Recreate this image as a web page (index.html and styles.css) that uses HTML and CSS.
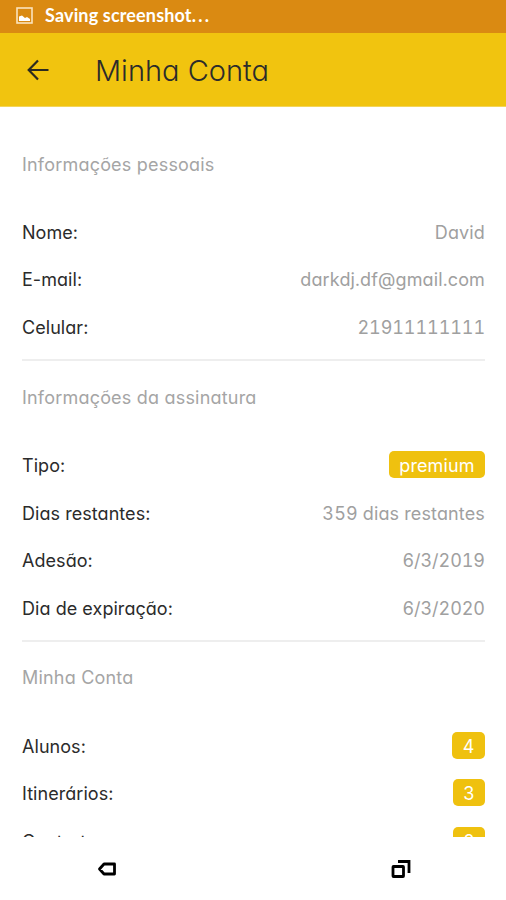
FILE: index.html
```
<!DOCTYPE html>
<html lang="pt-BR">
<head>
    <meta charset="UTF-8">
    <meta name="viewport" content="width=device-width, initial-scale=1.0">
    <title>Minha Conta</title>
    <link rel="stylesheet" href="styles.css">
</head>
<body>
    <div class="status-bar">
        <svg class="status-icon" width="17" height="17" viewBox="0 0 17 17">
            <rect x="1" y="1" width="15" height="15" fill="none" stroke="#fbe3bd" stroke-width="1.6"/>
            <path d="M3 14V9.500l3-1 3 2.500 2-1 3 2v2z" fill="#fff"/>
        </svg>
        <span>Saving screenshot<span class="dots">...</span></span>
    </div>

    <header class="toolbar">
        <svg class="back" width="22" height="22" viewBox="0 0 22 22" fill="none" stroke="#2b2b20" stroke-width="2.2">
            <path d="M21.500 11H2M11 1.500L1.700 11l9.300 9.500"/>
        </svg>
        <h1>Minha Conta</h1>
    </header>

    <main class="content">
        <section>
            <h2>Informações pessoais</h2>
            <div class="row"><span class="label">Nome:</span><span class="value">David</span></div>
            <div class="row"><span class="label">E-mail:</span><span class="value">darkdj.df@gmail.com</span></div>
            <div class="row"><span class="label">Celular:</span><span class="value phone">21911111111</span></div>
        </section>

        <section>
            <h2>Informações da assinatura</h2>
            <div class="row"><span class="label">Tipo:</span><span class="badge">premium</span></div>
            <div class="row"><span class="label">Dias restantes:</span><span class="value">359 dias restantes</span></div>
            <div class="row"><span class="label">Adesão:</span><span class="value date">6/3/2019</span></div>
            <div class="row"><span class="label">Dia de expiração:</span><span class="value date">6/3/2020</span></div>
        </section>

        <section>
            <h2>Minha Conta</h2>
            <div class="row"><span class="label">Alunos:</span><span class="badge">4</span></div>
            <div class="row"><span class="label">Itinerários:</span><span class="badge">3</span></div>
            <div class="row"><span class="label">Contratos:</span><span class="badge">2</span></div>
        </section>
    </main>

    <nav class="nav-bar">
        <svg width="20" height="14" viewBox="0 0 20 14" fill="none" stroke="#000" stroke-width="2.8" stroke-linejoin="round">
            <path d="M7 2h10.500v10H7L2.500 7z"/>
        </svg>
        <svg width="22" height="20" viewBox="0 0 22 20" fill="none" stroke="#000" stroke-width="2.800">
            <rect x="3" y="7.500" width="10.500" height="10" rx="0.500"/>
            <path d="M8 2.500h11V14"/>
        </svg>
    </nav>
</body>
</html>
```
FILE: styles.css
```
body {
    margin: 0;
    height: 900px;
    display: flex;
    flex-direction: column;
    overflow: hidden;
    background: #fff;
    color: #2b2b2b;
    font-family: Inter, "Open Sans", sans-serif;
    font-size: 18px;
    font-feature-settings: "cv11";
}

.status-bar {
    flex: none;
    height: 33px;
    box-sizing: border-box;
    padding: 0 0 3px 16px;
    display: flex;
    align-items: center;
    gap: 12px;
    background: #da8a12;
    color: #fff;
    font-family: Lato, sans-serif;
    font-weight: bold;
    font-size: 18px;
    letter-spacing: 0.15px;
}

.dots {
    letter-spacing: 2.3px;
}

.toolbar {
    flex: none;
    height: 74px;
    box-sizing: border-box;
    padding-left: 27px;
    display: flex;
    align-items: center;
    gap: 46px;
    background: #f1c40f;
    border-bottom: 1px solid #f3d55a;
}

h1 {
    margin: 2px 0 0;
    font-size: 29px;
    font-weight: 300;
}

.content {
    flex: 1;
    min-height: 0;
    overflow: hidden;
    padding: 33.5px 21px 0 22px;
}

section + section {
    margin-top: 8px;
    padding-top: 12.7px;
    border-top: 2px solid #eee;
}

h2 {
    margin: 0 0 21px;
    line-height: 47.4px;
    font-size: 18px;
    font-weight: 400;
    letter-spacing: 0.2px;
    color: #a5a5a5;
}

.row {
    height: 47.4px;
    display: flex;
    align-items: center;
    justify-content: space-between;
}

.label {
    letter-spacing: 0.05px;
}

.value {
    color: #a0a0a0;
    letter-spacing: 0.14px;
    font-feature-settings: "cv11", "tnum";
}

.phone {
    letter-spacing: -0.08px;
}

.date {
    letter-spacing: -0.05px;
}

.badge {
    height: 27px;
    line-height: 29px;
    padding: 0 10.5px;
    margin-bottom: 2px;
    border-radius: 5px;
    background: #efc10f;
    color: #fff;
    letter-spacing: 0.1px;
}

.nav-bar {
    flex: none;
    height: 63px;
    display: flex;
    align-items: center;
    justify-content: space-between;
    padding: 0 94px 0 97px;
}
```
